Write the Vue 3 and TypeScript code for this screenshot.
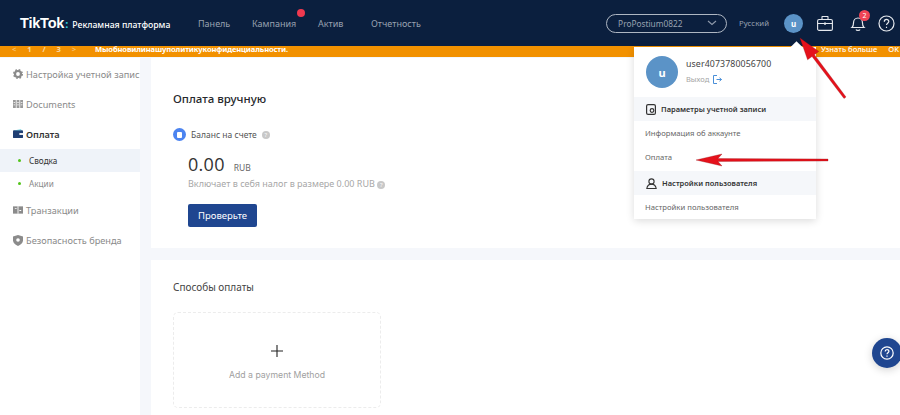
<template>
  <div class="page">
    <header class="topbar">
      <div class="logo"><span class="logo-main">TikTok</span><span class="logo-dot">:</span><span class="logo-sub">Рекламная платформа</span></div>
      <nav class="nav">
        <a v-for="item in navItems" :key="item.label" :class="['nav-item', item.cls]">{{ item.label }}<i v-if="item.dot" class="nav-dot"></i></a>
      </nav>
      <div class="top-right">
        <div class="account-select">
          <span>ProPostium0822</span>
          <svg width="10" height="6" viewBox="0 0 10 6"><path d="M1 1l4 3.5L9 1" fill="none" stroke="#8f9aab" stroke-width="1.1" /></svg>
        </div>
        <span class="lang">Русский</span>
        <div class="avatar-small">u</div>
        <svg class="top-icon case" width="16" height="15" viewBox="0 0 16 15" fill="none" stroke="#e6e9ee" stroke-width="1.1">
          <rect x=".6" y="3.500" width="14.800" height="10.900" rx="1.500" />
          <path d="M5 3.500V1q0-.5.5-.5h5q.5 0 .5.5v2.500M.6 7.500h14.800" />
          <path d="M8 6.500v2.200" stroke-width="1.800" />
        </svg>
        <div class="bell">
          <svg width="16" height="18" viewBox="0 0 16 18" fill="none" stroke="#e6e9ee" stroke-width="1.2">
            <path d="M2 13.500c1.200-1 1.500-2 1.500-4.500 0-3 2-5 4.500-5s4.500 2 4.500 5c0 2.500.3 3.500 1.500 4.500z" />
            <path d="M6 15.500c.5 1.300 3.500 1.300 4 0" />
          </svg>
          <b class="badge">2</b>
        </div>
        <svg class="top-icon" width="17" height="17" viewBox="0 0 17 17" fill="none" stroke="#e6e9ee" stroke-width="1.2">
          <circle cx="8.500" cy="8.500" r="7.500" />
          <path d="M6.300 6.700c0-3 4.500-2.900 4.500-.2 0 1.700-2.300 1.800-2.300 3.600" />
          <path d="M8.500 11.700v1.300" />
        </svg>
      </div>
    </header>

    <div class="notice">
      <div class="pager"><span class="faded">&lt;</span><span>1</span><span>/</span><span>3</span><span class="faded">&gt;</span></div>
      <span class="notice-text">Мыобновилинашуполитикуконфиденциальности.</span>
      <div class="notice-links"><span>Узнать больше</span><span>OK</span></div>
    </div>

    <div class="body">
      <aside class="sidebar">
        <div class="side-item">
          <svg width="10" height="10" viewBox="0 0 10 10" fill="none" stroke="#8b8b8b">
            <circle cx="5" cy="5" r="3" stroke-width="2.200" />
            <circle cx="5" cy="5" r="4.300" stroke-width="1.400" stroke-dasharray="1.700 1.700" />
          </svg>
          <span class="clip">Настройка учетной запис</span>
        </div>
        <div class="side-item">
          <svg width="10" height="10" viewBox="0 0 10 10" fill="#9a9a9a"><path d="M0 1h2.800v8H0zM3.600 1h2.800v8H3.600zM7.200 1H10v8H7.200z" /><path d="M.6 3h1.600v.7H.6zM4.200 3h1.600v.7H4.200zM7.800 3h1.600v.7H7.800zM.6 5.500h1.600v.7H.6zM4.200 5.500h1.600v.7H4.200zM7.800 5.500h1.600v.7H7.800z" fill="#fff" /></svg>
          <span>Documents</span>
        </div>
        <div class="side-item active">
          <svg width="10" height="10" viewBox="0 0 11 10"><rect y="1" width="11" height="8.500" rx="1" fill="#1f3f73" /><path d="M1 1l8-1v1z" fill="#19b5c9" /><rect x="7" y="4" width="4" height="2" fill="#fff" /></svg>
          <span>Оплата</span>
        </div>
        <div class="sub-item selected"><i></i>Сводка</div>
        <div class="sub-item"><i></i>Акции</div>
        <div class="side-item">
          <svg width="10" height="10" viewBox="0 0 11 10" fill="#8b8b8b"><path d="M0 1h11v8H0z" /><path d="M5 1h1v8H5z" fill="#fff" /><path d="M2 3h2v1H2zM7 5h2v1H7z" fill="#fff" /></svg>
          <span>Транзакции</span>
        </div>
        <div class="side-item">
          <svg width="10" height="11" viewBox="0 0 10 11"><path d="M5 0l5 1.500v4C10 8 7.500 10 5 11 2.500 10 0 8 0 5.500v-4z" fill="#8b8b8b" /><circle cx="5" cy="5" r="1.800" fill="#fff" /></svg>
          <span>Безопасность бренда</span>
        </div>
      </aside>

      <main class="content">
        <section class="card manual">
          <h2>Оплата вручную</h2>
          <div class="balance-row">
            <span class="balance-icon"><i></i></span>
            <span>Баланс на счете</span>
            <span class="hint">?</span>
          </div>
          <div class="amount"><strong>0.00</strong><span>RUB</span></div>
          <div class="tax">Включает в себя налог в размере 0.00 RUB <span class="hint">?</span></div>
          <button class="check-btn">Проверьте</button>
        </section>

        <section class="card methods">
          <h3>Способы оплаты</h3>
          <div class="add-method">
            <svg width="12" height="12" viewBox="0 0 12 12"><path d="M6 0v12M0 6h12" stroke="#222" stroke-width="1.100" /></svg>
            <span>Add a payment Method</span>
          </div>
        </section>
      </main>
    </div>

    <div class="menu">
      <div class="menu-caret"></div>
      <div class="menu-user">
        <div class="avatar-big">u</div>
        <div>
          <div class="user-name">user4073780056700</div>
          <div class="logout">Выход
            <svg width="9" height="9" viewBox="0 0 9 9" fill="none" stroke="#4a8fd8" stroke-width="1"><path d="M4 .5H.5v8H4M3.500 4.500h5M6.500 2.800l2 1.700-2 1.700" /></svg>
          </div>
        </div>
      </div>
      <div class="menu-head">
        <svg width="10" height="11" viewBox="0 0 10 11" fill="none" stroke="#333" stroke-width="1.200"><rect x=".6" y=".6" width="8.800" height="9.800" rx="1.500" /><circle cx="6" cy="6.500" r="1.800" /></svg>
        Параметры учетной записи
      </div>
      <div class="menu-row">Информация об аккаунте</div>
      <div class="menu-row pay">Оплата</div>
      <div class="menu-head">
        <svg width="11" height="11" viewBox="0 0 11 11" fill="none" stroke="#333" stroke-width="1.100"><circle cx="5.500" cy="3.500" r="2.600" /><path d="M.8 10.500c.5-3 2.500-4.400 4.700-4.400s4.200 1.400 4.700 4.400z" /></svg>
        Настройки пользователя
      </div>
      <div class="menu-row">Настройки пользователя</div>
    </div>

    <svg class="arrows" width="900" height="415" viewBox="0 0 900 415">
      <path d="M800 38L818.800 51.400 814.400 54.700 846 97 844 98.500 812 56.500 807.600 59.800z" fill="#e5111b" stroke="#8c1015" stroke-width=".5" stroke-opacity=".6" />
      <path d="M696 160L722 154 718 158.500 828 159 828 161 718 161.500 722 166z" fill="#e5111b" stroke="#8c1015" stroke-width=".5" stroke-opacity=".6" />
    </svg>

    <button class="help-float">
      <svg width="14" height="14" viewBox="0 0 17 17" fill="none" stroke="#fff" stroke-width="1.500">
        <circle cx="8.500" cy="8.500" r="7.500" />
        <path d="M6.300 6.700c0-3 4.500-2.900 4.500-.2 0 1.700-2.300 1.800-2.300 3.600M8.500 11.500v1.500" />
      </svg>
    </button>
  </div>
</template>

<script setup lang="ts">
const navItems = [
  { label: 'Панель', cls: 'n-panel', dot: false },
  { label: 'Кампания', cls: 'n-camp', dot: true },
  { label: 'Актив', cls: 'n-asset', dot: false },
  { label: 'Отчетность', cls: 'n-report', dot: false },
]
</script>

<style scoped>
.page {
  position: relative;
  width: 900px;
  height: 415px;
  overflow: hidden;
  background: #f5f7fb;
  font-family: "Noto Sans", "Open Sans", sans-serif;
  color: #333;
}

.topbar {
  display: flex;
  align-items: center;
  height: 46px;
  padding-left: 20px;
  background: #0b1f3e;
}

.logo {
  display: flex;
  align-items: baseline;
  width: 178px;
  color: #fff;
}

.logo-main {
  font-family: "Liberation Sans", sans-serif;
  font-size: 14.5px;
  font-weight: 700;
  letter-spacing: -0.2px;
}

.logo-dot {
  margin: 0 4px 0 1px;
  font-size: 11px;
  font-weight: 700;
  color: #2fd0dc;
}

.logo-sub {
  font-size: 8.700px;
  font-weight: 500;
  white-space: nowrap;
}

.nav {
  display: flex;
  align-items: center;
}

.nav-item {
  position: relative;
  font-size: 9px;
  color: #98a1b0;
  white-space: nowrap;
}

.n-panel { width: 54px; }
.n-camp { width: 66px; }
.n-asset { width: 53px; }

.nav-dot {
  position: absolute;
  top: -8px;
  left: 45px;
  width: 8px;
  height: 8px;
  border-radius: 50%;
  background: #f0394f;
}

.top-right {
  display: flex;
  align-items: center;
  margin-left: auto;
  padding-right: 5px;
}

.account-select {
  display: flex;
  align-items: center;
  justify-content: space-between;
  width: 121px;
  height: 19px;
  box-sizing: border-box;
  padding: 0 9px 0 11px;
  border: 1px solid #aeb6c2;
  border-radius: 10px;
  font-size: 8.300px;
  color: #98a1b0;
}

.lang {
  margin-left: 12px;
  font-size: 7.800px;
  color: #98a1b0;
}

.avatar-small {
  display: flex;
  align-items: center;
  justify-content: center;
  width: 19px;
  height: 19px;
  margin-left: 15px;
  border-radius: 50%;
  background: #5b93c7;
  color: #fff;
  font-size: 8px;
  font-weight: 700;
}

.case { margin-left: 14px; }

.bell {
  position: relative;
  display: flex;
  margin-left: 17px;
}

.badge {
  position: absolute;
  top: -4px;
  left: 9px;
  width: 11px;
  height: 11px;
  border-radius: 50%;
  background: #ef4455;
  color: #fff;
  font-size: 7px;
  font-weight: 400;
  line-height: 11px;
  text-align: center;
}

.bell + .top-icon { margin-left: 12px; }

.notice {
  display: flex;
  align-items: flex-start;
  box-sizing: border-box;
  height: 11px;
  padding-left: 12px;
  background: #f29100;
  color: #fff;
  font-size: 7.600px;
  line-height: 7px;
  font-weight: 700;
}

.pager {
  display: flex;
  justify-content: space-between;
  width: 64px;
  color: #f8d9a4;
}

.faded { opacity: 0.7; }

.notice-text {
  margin-left: 19px;
  letter-spacing: -0.15px;
  white-space: nowrap;
}

.notice-links {
  display: flex;
  gap: 11px;
  margin-left: auto;
  margin-right: 1px;
  font-weight: 500;
  white-space: nowrap;
}

.body {
  display: flex;
  height: 358px;
  padding-top: 1px;
  box-sizing: border-box;
}

.sidebar {
  width: 140px;
  flex-shrink: 0;
  padding-top: 1px;
  background: #fff;
  font-size: 9.200px;
  color: #8a8a8a;
}

.side-item {
  display: flex;
  align-items: center;
  gap: 3px;
  height: 30px;
  padding-left: 13px;
  white-space: nowrap;
  overflow: hidden;
}

.side-item svg { flex-shrink: 0; }

.active {
  color: #333;
  font-weight: 600;
}

.sub-item {
  display: flex;
  align-items: center;
  gap: 8px;
  height: 23px;
  padding-left: 18px;
  font-size: 8.200px;
}

.sub-item i {
  width: 3px;
  height: 3px;
  border-radius: 50%;
  background: #52c41a;
}

.selected {
  background: #eff3f9;
  color: #333;
}

.content {
  flex: 1;
  display: flex;
  flex-direction: column;
  gap: 12px;
  margin-left: 11px;
}

.card {
  background: #fff;
  padding-left: 22px;
}

.manual {
  height: 190px;
  flex-shrink: 0;
  box-sizing: border-box;
  padding-top: 33px;
}

h2 {
  margin: 0;
  font-size: 11.500px;
  line-height: 16px;
  font-weight: 500;
  color: #26282c;
}

.balance-row {
  display: flex;
  align-items: center;
  gap: 5px;
  margin-top: 21px;
  font-size: 8.500px;
  color: #555;
}

.balance-icon {
  display: flex;
  align-items: center;
  justify-content: center;
  width: 13px;
  height: 13px;
  border-radius: 50%;
  background: #4c84f0;
}

.balance-icon i {
  width: 5px;
  height: 6px;
  background: #fff;
  border-radius: 1px;
}

.hint {
  display: inline-block;
  width: 8px;
  height: 8px;
  border-radius: 50%;
  background: #c8c8c8;
  color: #fff;
  font-size: 6px;
  line-height: 8px;
  text-align: center;
  vertical-align: 0;
}

.amount {
  display: flex;
  align-items: baseline;
  gap: 9px;
  margin: 13px 0 0 15px;
  line-height: 20px;
  color: #333;
}

.amount strong {
  font-family: "Open Sans", sans-serif;
  font-size: 18px;
  font-weight: 400;
  letter-spacing: 0.3px;
}

.amount span {
  font-size: 8.500px;
  color: #666;
}

.tax {
  margin: 0 0 0 15px;
  font-size: 9px;
  line-height: 12px;
  color: #a7a7a7;
}

.check-btn {
  display: block;
  width: 69px;
  height: 23px;
  margin: 14px 0 0 15px;
  padding: 0;
  border: none;
  border-radius: 2px;
  background: #1f4690;
  color: #fff;
  font-family: inherit;
  font-size: 9.500px;
}

.methods {
  flex: 1;
  padding-top: 20px;
}

h3 {
  margin: 0;
  font-size: 10px;
  line-height: 14px;
  font-weight: 400;
  color: #444;
}

.add-method {
  display: flex;
  flex-direction: column;
  align-items: center;
  gap: 13px;
  box-sizing: border-box;
  width: 208px;
  height: 96px;
  margin-top: 18px;
  padding-top: 32px;
  border: 1px dashed #ececec;
  border-radius: 5px;
  font-family: "Inter", "Liberation Sans", sans-serif;
  font-size: 8.700px;
  color: #a0a0a0;
}

.menu {
  position: absolute;
  top: 47px;
  left: 634px;
  width: 182px;
  background: #fff;
  box-shadow: 0 2px 8px rgba(0, 0, 0, 0.14);
}

.menu-caret {
  position: absolute;
  top: -4px;
  left: 158px;
  width: 9px;
  height: 9px;
  background: #fff;
  transform: rotate(45deg);
}

.menu-user {
  position: relative;
  display: flex;
  gap: 8px;
  box-sizing: border-box;
  height: 50px;
  padding: 9px 0 0 12px;
}

.avatar-big {
  display: flex;
  align-items: center;
  justify-content: center;
  width: 32px;
  height: 32px;
  border-radius: 50%;
  background: #5b93c7;
  color: #fff;
  font-size: 11px;
  font-weight: 700;
}

.user-name {
  margin-top: 2px;
  font-size: 8.800px;
  line-height: 13px;
  color: #444;
  letter-spacing: 0.1px;
}

.logout {
  display: flex;
  align-items: center;
  gap: 4px;
  margin-top: 2px;
  font-size: 7.500px;
  line-height: 12px;
  color: #a5a5a5;
}

.menu-head {
  display: flex;
  align-items: center;
  gap: 5px;
  height: 24px;
  padding-left: 12px;
  background: #f5f7fa;
  font-size: 7.500px;
  font-weight: 600;
  color: #333;
}

.menu-row {
  display: flex;
  align-items: center;
  height: 24px;
  padding-left: 11px;
  font-size: 7.700px;
  color: #666;
}

.menu-row.pay {
  box-sizing: border-box;
  height: 26px;
  padding-bottom: 2px;
}

.arrows {
  position: absolute;
  top: 0;
  left: 0;
  pointer-events: none;
}

.help-float {
  position: absolute;
  top: 338px;
  left: 872px;
  display: flex;
  align-items: center;
  justify-content: center;
  width: 30px;
  height: 30px;
  padding: 0;
  border: none;
  border-radius: 50%;
  background: #1f4690;
  box-shadow: 0 2px 8px rgba(0, 0, 0, 0.18);
}
</style>
